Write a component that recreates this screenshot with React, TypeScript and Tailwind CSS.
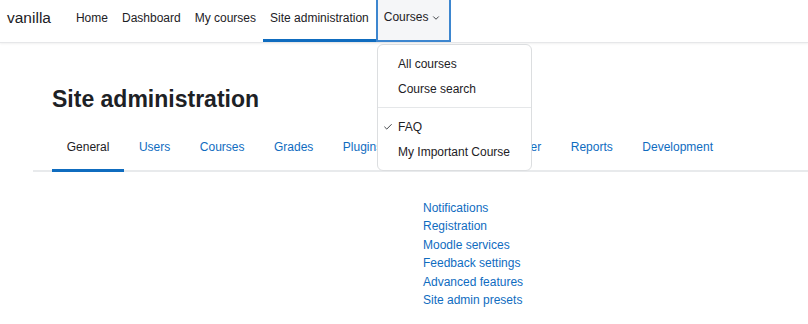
import { Check, ChevronDown } from "lucide-react";

const font = { fontFamily: '"Liberation Sans", Arial, sans-serif' };

const navItems = ["Home", "Dashboard", "My courses", "Site administration"];
const tabs = ["General", "Users", "Courses", "Grades", "Plugins", "Appearance", "Server", "Reports", "Development"];
const links = [
  "Notifications",
  "Registration",
  "Moodle services",
  "Feedback settings",
  "Advanced features",
  "Site admin presets",
];

export default function App() {
  return (
    <div className="relative w-[808px] h-[324px] overflow-hidden bg-white text-[#1d2125]" style={font}>
      {/* Top navbar */}
      <nav className="h-[43px] flex items-stretch border-b border-[#e6e7e9] shadow-[0_1px_2px_rgba(0,0,0,0.06)]">
        <span className="pl-[7px] pr-[18px] pb-[6px] flex items-center text-[15.5px]">vanilla</span>
        <ul className="flex items-stretch text-[12px]">
          {navItems.map((item, i) => (
            <li
              key={item}
              className={
                i === navItems.length - 1
                  ? "flex items-center px-[7px] pb-[3px] border-b-[3px] border-[#0f6cbf]"
                  : "flex items-center px-[7px] pb-[6px]"
              }
            >
              {item}
            </li>
          ))}
          <li className="flex items-center gap-[3px] pl-[6px] pr-[8px] pb-[6px] h-[42px] border-2 border-t-0 border-[#3d86cf] bg-[#f5f6f8]">
            Courses
            <ChevronDown size={10} strokeWidth={2} className="mt-[2px]" />
          </li>
        </ul>
      </nav>

      {/* Page */}
      <main className="pl-[33px] pt-[38px]">
        <h1 className="pl-[19px] text-[23px] leading-[36px] font-bold">Site administration</h1>
        <ul className="mt-[11px] pl-[19px] flex border-b-2 border-[#e8eaec] text-[12px]">
          {tabs.map((t, i) => (
            <li
              key={t}
              className={
                i === 0
                  ? "px-[14.75px] pt-[10px] pb-[13px] -mb-[2px] border-b-[3px] border-[#0f6cbf] text-[#1d2125]"
                  : "px-[14.75px] pt-[10px] pb-[13px] -mb-[2px] border-b-[3px] border-transparent text-[#0f6cbf]"
              }
            >
              {t}
            </li>
          ))}
        </ul>
        <div className="grid grid-cols-[390px_1fr] pt-[27px]">
          <div />
          <ul className="text-[12px] leading-[18.4px] text-[#0f6cbf]">
            {links.map((l) => (
              <li key={l}>{l}</li>
            ))}
          </ul>
        </div>
      </main>

      {/* Courses dropdown */}
      <div className="absolute left-[377px] top-[44px] w-[155px] pt-[6px] pb-[6px] bg-white border border-[#dcdee0] rounded-[6px] text-[12px]">
        <div className="pl-[20px] h-[25px] flex items-center">All courses</div>
        <div className="pl-[20px] h-[25px] flex items-center">Course search</div>
        <div className="my-[6px] border-t border-[#e5e7e9]" />
        <div className="relative pl-[20px] h-[25px] flex items-center">
          <Check size={10} strokeWidth={2} className="absolute left-[5px]" />
          FAQ
        </div>
        <div className="pl-[20px] h-[25px] flex items-center">My Important Course</div>
      </div>
    </div>
  );
}
